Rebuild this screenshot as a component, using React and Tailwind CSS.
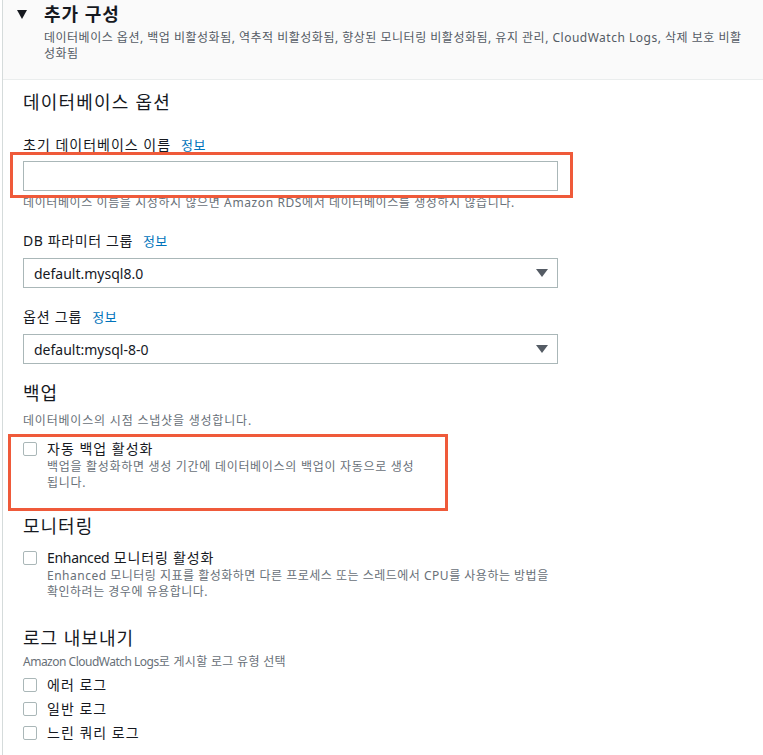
import React from "react";

const FONT = { fontFamily: '"Noto Sans", "Noto Sans CJK KR", sans-serif' };

function Info() {
  return <span className="ml-[10px] text-[13px] tracking-[0.5px] text-[#0073bb]">정보</span>;
}

function Select({ value }) {
  return (
    <div className="flex h-[30px] items-center justify-between border border-[#aab7b8] bg-white pl-[10px] pr-[9px] text-[14px] text-[#16191f]">
      <span>{value}</span>
      <svg width="12" height="8" viewBox="0 0 12 8">
        <path d="M0 0 H12 L6 8 Z" fill="#545b64" />
      </svg>
    </div>
  );
}

function Checkbox() {
  return <div className="mt-[3px] h-[14px] w-[14px] shrink-0 rounded-[2px] border border-[#aab7b8] bg-white" />;
}

function CheckRow({ label, desc, className = "", descTrack = "tracking-[0.7px]", labelTrack = "tracking-[1px]" }) {
  return (
    <div className={"flex gap-[10px] " + className}>
      <Checkbox />
      <div>
        <div className={"text-[14px] leading-[20px] text-[#16191f] " + labelTrack}>{label}</div>
        {desc && <div className={"text-[12px] leading-[16px] text-[#687078] " + descTrack}>{desc}</div>}
      </div>
    </div>
  );
}

export default function App() {
  return (
    <div style={FONT} className="relative h-[755px] w-[763px] overflow-hidden bg-white">
      <div className="ml-[2px] h-full border-l border-[#d5dbdb]">
        {/* header */}
        <div className="flex border-b border-[#eaeded] bg-[#fafafa] pb-[17px] pl-[14px] pr-[10px] pt-[3px]">
          <div className="w-[27px] pt-[7px]">
            <svg width="10" height="9" viewBox="0 0 10 9">
              <path d="M0 0 H10 L5 9 Z" fill="#16191f" />
            </svg>
          </div>
          <div>
            <div className="text-[18px] font-bold leading-[22px] tracking-[1px] text-[#16191f]">추가 구성</div>
            <div className="mt-[5px] whitespace-nowrap text-[12px] leading-[16px] tracking-[0.5px] text-[#545b64]">
              데이터베이스 옵션, 백업 비활성화됨, 역추적 비활성화됨, 향상된 모니터링 비활성화됨, 유지 관리, CloudWatch Logs, 삭제 보호 비활
              <br />
              성화됨
            </div>
          </div>
        </div>

        {/* body */}
        <div className="w-[555px] pl-[20px] pt-[11px]">
          <div className="text-[18px] leading-[22px] tracking-[1.2px] text-[#16191f]">데이터베이스 옵션</div>

          <div className="mt-[22px] text-[14px] leading-[20px] tracking-[1px] text-[#16191f]">
            초기 데이터베이스 이름<Info />
          </div>
          <div className="mt-[6px] h-[30px] border border-[#aab7b8] bg-white" />
          <div className="mt-[4px] whitespace-nowrap text-[12px] leading-[16px] tracking-[0.6px] text-[#687078]">
            데이터베이스 이름을 지정하지 않으면 Amazon RDS에서 데이터베이스를 생성하지 않습니다.
          </div>

          <div className="mt-[20px] text-[14px] leading-[20px] tracking-[0.6px] text-[#16191f]">
            DB 파라미터 그룹<Info />
          </div>
          <div className="mt-[7px]">
            <Select value="default.mysql8.0" />
          </div>

          <div className="mt-[19px] text-[14px] leading-[20px] tracking-[0.8px] text-[#16191f]">
            옵션 그룹<Info />
          </div>
          <div className="mt-[7px]">
            <Select value="default:mysql-8-0" />
          </div>

          <div className="mt-[18px] text-[18px] leading-[22px] tracking-[1px] text-[#16191f]">백업</div>
          <div className="mt-[9px] text-[12px] leading-[16px] tracking-[0.8px] text-[#687078]">데이터베이스의 시점 스냅샷을 생성합니다.</div>
          <CheckRow
            className="mt-[10px]"
            label="자동 백업 활성화"
            desc={
              <span className="whitespace-nowrap">
                백업을 활성화하면 생성 기간에 데이터베이스의 백업이 자동으로 생성
                <br />
                됩니다.
              </span>
            }
          />

          <div className="mt-[24px] text-[18px] leading-[22px] tracking-[1px] text-[#16191f]">모니터링</div>
          <CheckRow
            className="mt-[11px]"
            label={
              <>
                <span className="tracking-[-0.3px]">Enhanced</span>
                <span className="tracking-[0.8px]"> 모니터링 활성화</span>
              </>
            }
            labelTrack=""
            descTrack="tracking-[0.5px]"
            desc={
              <span className="whitespace-nowrap">
                Enhanced 모니터링 지표를 활성화하면 다른 프로세스 또는 스레드에서 CPU를 사용하는 방법을
                <br />
                확인하려는 경우에 유용합니다.
              </span>
            }
          />

          <div className="mt-[27px] text-[18px] leading-[22px] tracking-[1px] text-[#16191f]">로그 내보내기</div>
          <div className="mt-[5px] text-[12px] leading-[16px] text-[#687078]">
            <span className="tracking-[-0.5px]">Amazon CloudWatch Logs</span>
            <span className="tracking-[0.3px]">로 게시할 로그 유형 선택</span>
          </div>
          <CheckRow className="mt-[5px]" label="에러 로그" />
          <CheckRow className="mt-[4px]" label="일반 로그" />
          <CheckRow className="mt-[4px]" label="느린 쿼리 로그" />
        </div>
      </div>

      {/* highlight overlays */}
      <div className="pointer-events-none absolute left-[10px] top-[152px] h-[46px] w-[563px] border-[3px] border-[#ef5a3a]" />
      <div className="pointer-events-none absolute left-[8px] top-[434px] h-[77px] w-[440px] border-[3px] border-[#ef5a3a]" />
    </div>
  );
}
